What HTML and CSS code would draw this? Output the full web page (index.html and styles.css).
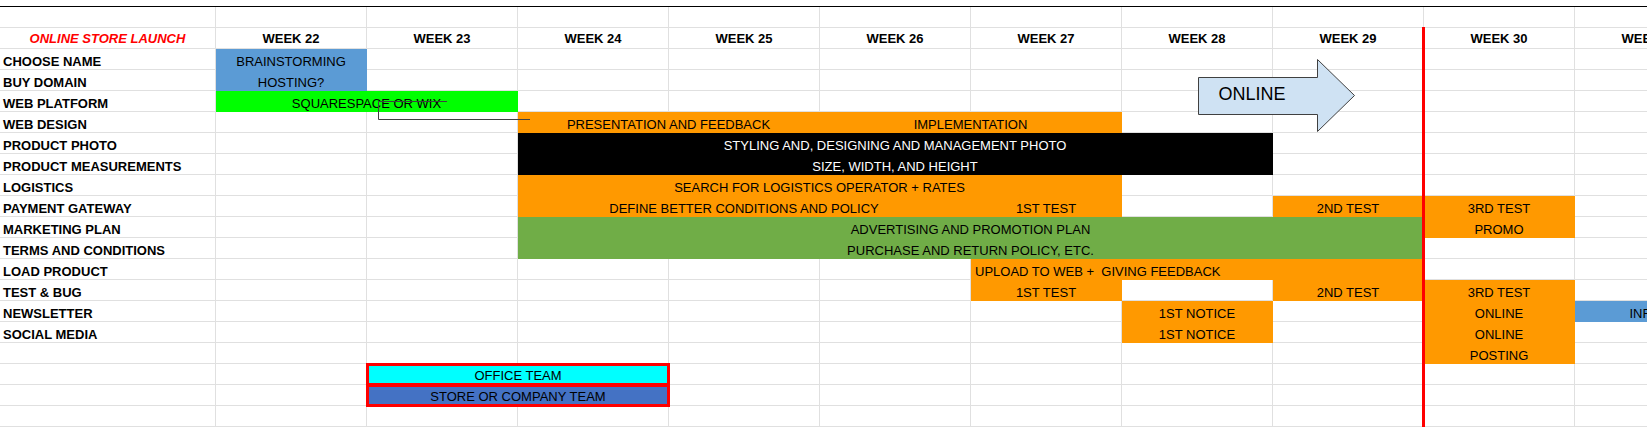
FILE: index.html
```html
<!DOCTYPE html>
<html>
<head>
<meta charset="utf-8">
<title>Online Store Launch</title>
<link rel="stylesheet" href="styles.css">
</head>
<body>
<div class="page">
  <div class="topline"></div>
  <div class="sheet">
    <!-- row 0 -->
    <div class="c"></div><div class="c"></div><div class="c"></div><div class="c"></div><div class="c"></div><div class="c"></div><div class="c"></div><div class="c"></div><div class="c"></div><div class="c"></div><div class="c"></div>
    <!-- row 1 header -->
    <div class="c hd title">ONLINE STORE LAUNCH</div>
    <div class="c hd">WEEK 22</div><div class="c hd">WEEK 23</div><div class="c hd">WEEK 24</div><div class="c hd">WEEK 25</div><div class="c hd">WEEK 26</div><div class="c hd">WEEK 27</div><div class="c hd">WEEK 28</div><div class="c hd">WEEK 29</div><div class="c hd">WEEK 30</div><div class="c hd">WEEK 31</div>
    <!-- row 2 -->
    <div class="c lbl">CHOOSE NAME</div>
    <div class="c bl">BRAINSTORMING</div>
    <div class="c"></div><div class="c"></div><div class="c"></div><div class="c"></div><div class="c"></div><div class="c"></div><div class="c"></div><div class="c"></div><div class="c"></div>
    <!-- row 3 -->
    <div class="c lbl">BUY DOMAIN</div>
    <div class="c bl">HOSTING?</div>
    <div class="c"></div><div class="c"></div><div class="c"></div><div class="c"></div><div class="c"></div><div class="c"></div><div class="c"></div><div class="c"></div><div class="c"></div>
    <!-- row 4 -->
    <div class="c lbl">WEB PLATFORM</div>
    <div class="c gn s2">SQUARESPACE OR WIX</div>
    <div class="c"></div><div class="c"></div><div class="c"></div><div class="c"></div><div class="c"></div><div class="c"></div><div class="c"></div><div class="c"></div>
    <!-- row 5 -->
    <div class="c lbl">WEB DESIGN</div>
    <div class="c"></div><div class="c"></div>
    <div class="c or s2">PRESENTATION AND FEEDBACK</div>
    <div class="c or s2">IMPLEMENTATION</div>
    <div class="c"></div><div class="c"></div><div class="c"></div><div class="c"></div>
    <!-- row 6 -->
    <div class="c lbl">PRODUCT PHOTO</div>
    <div class="c"></div><div class="c"></div>
    <div class="c bk s5">STYLING AND, DESIGNING AND MANAGEMENT PHOTO</div>
    <div class="c"></div><div class="c"></div><div class="c"></div>
    <!-- row 7 -->
    <div class="c lbl">PRODUCT MEASUREMENTS</div>
    <div class="c"></div><div class="c"></div>
    <div class="c bk s5">SIZE, WIDTH, AND HEIGHT</div>
    <div class="c"></div><div class="c"></div><div class="c"></div>
    <!-- row 8 -->
    <div class="c lbl">LOGISTICS</div>
    <div class="c"></div><div class="c"></div>
    <div class="c or s4">SEARCH FOR LOGISTICS OPERATOR + RATES</div>
    <div class="c"></div><div class="c"></div><div class="c"></div><div class="c"></div>
    <!-- row 9 -->
    <div class="c lbl">PAYMENT GATEWAY</div>
    <div class="c"></div><div class="c"></div>
    <div class="c or s3">DEFINE BETTER CONDITIONS AND POLICY</div>
    <div class="c or">1ST TEST</div>
    <div class="c"></div>
    <div class="c or">2ND TEST</div>
    <div class="c or">3RD TEST</div>
    <div class="c"></div>
    <!-- row 10 -->
    <div class="c lbl">MARKETING PLAN</div>
    <div class="c"></div><div class="c"></div>
    <div class="c gr s6">ADVERTISING AND PROMOTION PLAN</div>
    <div class="c or">PROMO</div>
    <div class="c"></div>
    <!-- row 11 -->
    <div class="c lbl">TERMS AND CONDITIONS</div>
    <div class="c"></div><div class="c"></div>
    <div class="c gr s6">PURCHASE AND RETURN POLICY, ETC.</div>
    <div class="c"></div><div class="c"></div>
    <!-- row 12 -->
    <div class="c lbl">LOAD PRODUCT</div>
    <div class="c"></div><div class="c"></div><div class="c"></div><div class="c"></div><div class="c"></div>
    <div class="c or s3 left">UPLOAD TO WEB +  GIVING FEEDBACK</div>
    <div class="c"></div><div class="c"></div>
    <!-- row 13 -->
    <div class="c lbl">TEST &amp; BUG</div>
    <div class="c"></div><div class="c"></div><div class="c"></div><div class="c"></div><div class="c"></div>
    <div class="c or">1ST TEST</div>
    <div class="c"></div>
    <div class="c or">2ND TEST</div>
    <div class="c or">3RD TEST</div>
    <div class="c"></div>
    <!-- row 14 -->
    <div class="c lbl">NEWSLETTER</div>
    <div class="c"></div><div class="c"></div><div class="c"></div><div class="c"></div><div class="c"></div><div class="c"></div>
    <div class="c or">1ST NOTICE</div>
    <div class="c"></div>
    <div class="c or">ONLINE</div>
    <div class="c bl info">INFO</div>
    <!-- row 15 -->
    <div class="c lbl">SOCIAL MEDIA</div>
    <div class="c"></div><div class="c"></div><div class="c"></div><div class="c"></div><div class="c"></div><div class="c"></div>
    <div class="c or">1ST NOTICE</div>
    <div class="c"></div>
    <div class="c or">ONLINE</div>
    <div class="c"></div>
    <!-- row 16 -->
    <div class="c lbl"></div>
    <div class="c"></div><div class="c"></div><div class="c"></div><div class="c"></div><div class="c"></div><div class="c"></div><div class="c"></div><div class="c"></div>
    <div class="c or">POSTING</div>
    <div class="c"></div>
    <!-- row 17 -->
    <div class="c"></div><div class="c"></div>
    <div class="c s2 legend cy">OFFICE TEAM</div>
    <div class="c"></div><div class="c"></div><div class="c"></div><div class="c"></div><div class="c"></div><div class="c"></div><div class="c"></div>
    <!-- row 18 -->
    <div class="c"></div><div class="c"></div>
    <div class="c s2 legend db">STORE OR COMPANY TEAM</div>
    <div class="c"></div><div class="c"></div><div class="c"></div><div class="c"></div><div class="c"></div><div class="c"></div><div class="c"></div>
    <!-- row 19 -->
    <div class="c"></div><div class="c"></div><div class="c"></div><div class="c"></div><div class="c"></div><div class="c"></div><div class="c"></div><div class="c"></div><div class="c"></div><div class="c"></div><div class="c"></div>
  </div>

  <!-- drawing objects lying over the sheet -->
  <div class="today-line"></div>
  <svg class="connector" width="170" height="30" viewBox="0 0 170 30">
    <polyline points="77,6.5 8.5,6.5 8.5,24.5 160,24.5" fill="none" stroke="#404040" stroke-width="1"/>
  </svg>
  <svg class="arrow" width="158" height="75" viewBox="0 0 158 75">
    <polygon points="0.5,18.5 119.5,18.5 119.5,0.5 156.5,36.5 119.5,72.5 119.5,55.5 0.5,55.5" fill="#cfe2f3" stroke="#404040" stroke-width="1"/>
    <text x="20.5" y="40.5" font-family="Liberation Sans, Arial, sans-serif" font-size="18" fill="#000">ONLINE</text>
  </svg>
</div>
</body>
</html>
```

FILE: styles.css
```css
html, body {
  margin: 0;
  padding: 0;
  background: #fff;
}

body {
  width: 1647px;
  height: 439px;
  overflow: hidden;
  font-family: "Liberation Sans", Arial, sans-serif;
  font-size: 13px;
  color: #000;
}

.page {
  position: relative;
  width: 1647px;
  height: 439px;
  overflow: hidden;
}

.topline {
  height: 6px;
  border-bottom: 1px solid #000;
}

.sheet {
  display: grid;
  grid-template-columns: 216px repeat(10, 151px);
  grid-auto-rows: 21px;
  width: max-content;
}

.c {
  box-sizing: border-box;
  border-right: 1px solid #e0e0e0;
  border-bottom: 1px solid #e0e0e0;
  display: flex;
  align-items: flex-end;
  justify-content: center;
  white-space: pre;
  line-height: normal;
  min-width: 0;
}

.hd {
  align-items: center;
  font-weight: bold;
}

.title {
  color: #ff0000;
  font-style: italic;
}

.lbl {
  justify-content: flex-start;
  padding-left: 3px;
  font-weight: bold;
}

.left {
  justify-content: flex-start;
  padding-left: 4px;
}

.s2 { grid-column: span 2; }
.s3 { grid-column: span 3; }
.s4 { grid-column: span 4; }
.s5 { grid-column: span 5; }
.s6 { grid-column: span 6; }

.or { background: #ff9900; border-color: #ff9900; }
.bl { background: #5b9bd5; border-color: #5b9bd5; }
.gn { background: #00ff00; border-color: #00ff00; }
.gr { background: #70ad47; border-color: #70ad47; }
.bk { background: #000; border-color: #000; color: #fff; }
.cy { background: #00ffff; }
.db { background: #4472c4; }

.info {
  padding-right: 10px;
}

.legend {
  position: relative;
  z-index: 1;
  margin: -1px;
  border: 3px solid #ff0000;
}

.today-line {
  position: absolute;
  left: 1422px;
  top: 27px;
  width: 3px;
  height: 400px;
  background: #ff0000;
  z-index: 2;
}

.connector {
  position: absolute;
  left: 370px;
  top: 95px;
  z-index: 2;
}

.arrow {
  position: absolute;
  left: 1198px;
  top: 59px;
  z-index: 2;
}
```
